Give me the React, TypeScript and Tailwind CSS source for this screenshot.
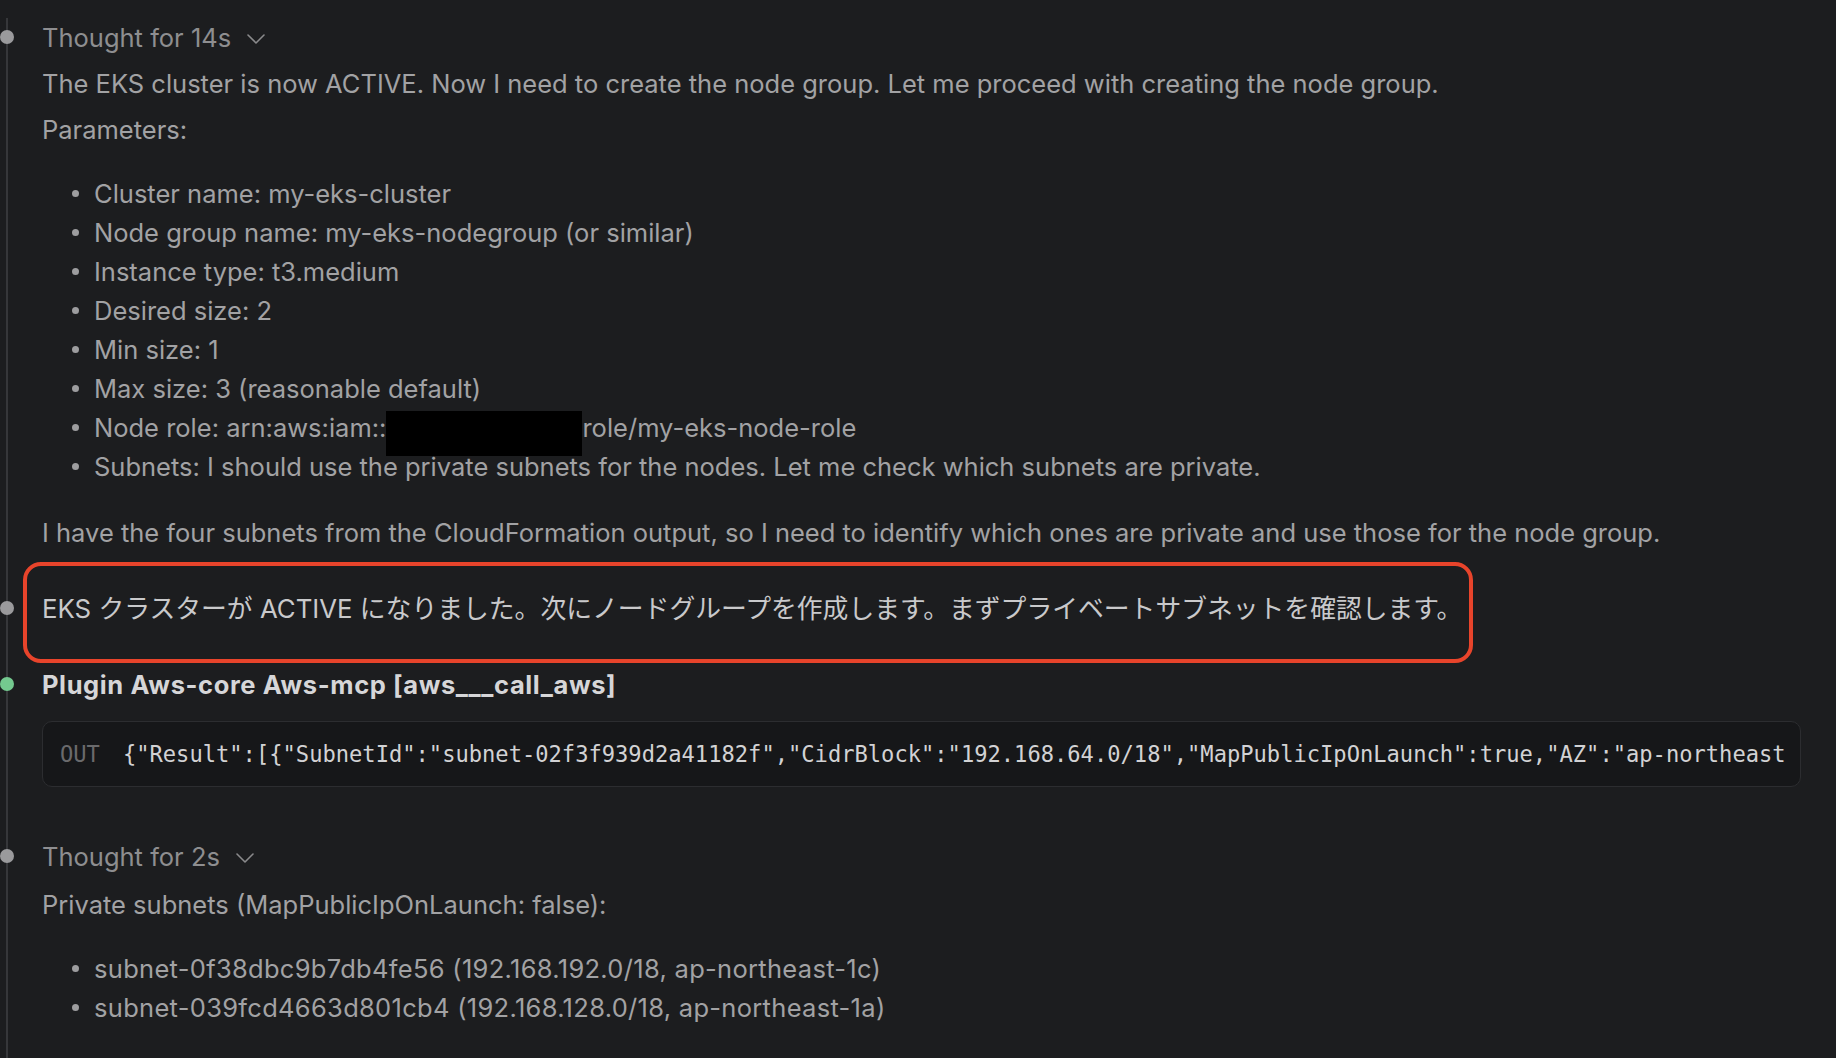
const sans = "font-['Inter','Noto_Sans_CJK_JP',sans-serif]";

const Dot = ({ green }: { green?: boolean }) => (
  <span
    className={`absolute -left-[42px] top-[12px] h-[14px] w-[14px] rounded-full ${
      green ? "bg-[#74c98f]" : "bg-[#9a9a9c]"
    }`}
  />
);

const Bullets = ({ items, wide }: { items: React.ReactNode[]; wide?: boolean }) => (
  <ul className={`mt-[25px] flex flex-col ${wide ? "tracking-[0.3px]" : ""}`}>
    {items.map((item, i) => (
      <li key={i} className="flex h-[39px] items-center pl-[30px]">
        <span className="mr-[15px] h-[7px] w-[7px] shrink-0 rounded-full bg-[#9d9d9f]" />
        <span className="flex items-center whitespace-nowrap">{item}</span>
      </li>
    ))}
  </ul>
);

const Thought = ({ label }: { label: string }) => (
  <div className="relative flex h-[39px] items-center">
    <Dot />
    <span className="text-[#8e8e90]">{label}</span>
    <svg className="ml-[16px] mt-[2px]" width="18" height="10" viewBox="0 0 18 10" fill="none">
      <path d="M1 1l8 8 8-8" stroke="#8a8a8c" strokeWidth="1.6" strokeLinecap="round" strokeLinejoin="round" />
    </svg>
  </div>
);

export default function App() {
  return (
    <div className={`h-screen w-full overflow-hidden bg-[#1c1d1f] pl-[6px] pt-[18px] ${sans} text-[25.5px] leading-[39px] text-[#a2a2a4]`}>
      <div className="min-h-full border-l-2 border-[#36373a] pl-[34px]">
        <Thought label="Thought for 14s" />
        <p className="mt-[7px] whitespace-nowrap">
          The EKS cluster is now ACTIVE. Now I need to create the node group. Let me proceed with creating the node group.
        </p>
        <p className="mt-[7px]">Parameters:</p>
        <Bullets
          items={[
            "Cluster name: my-eks-cluster",
            "Node group name: my-eks-nodegroup (or similar)",
            "Instance type: t3.medium",
            "Desired size: 2",
            "Min size: 1",
            "Max size: 3 (reasonable default)",
            <>
              <span>Node role: arn:aws:iam::</span>
              <span className="block h-[45px] w-[196px] translate-y-[6px] bg-black" />
              <span>role/my-eks-node-role</span>
            </>,
            "Subnets: I should use the private subnets for the nodes. Let me check which subnets are private.",
          ]}
        />
        <p className="mt-[27px] whitespace-nowrap">
          I have the four subnets from the CloudFormation output, so I need to identify which ones are private and use those for the node group.
        </p>

        <div className="relative mt-[37px] h-[39px] whitespace-nowrap text-[25.8px] text-[#c9c9cb]">
          <Dot />
          <div className="pointer-events-none absolute -top-[27px] left-[-19px] h-[101px] w-[1450px] rounded-[18px] border-4 border-[#e8442b]" />
          EKS クラスターが ACTIVE になりました。次にノードグループを作成します。まずプライベートサブネットを確認します。
        </div>

        <div className="relative mt-[37px] flex h-[39px] items-center font-bold tracking-[0.6px] text-[#d6d6d8]">
          <Dot green />
          Plugin Aws-core Aws-mcp [aws___call_aws]
        </div>

        <div className="mt-[17px] mr-[35px] flex h-[66px] items-center overflow-hidden whitespace-nowrap rounded-[10px] border border-[#2c2d30] bg-[#161719] pl-[17px] font-['DejaVu_Sans_Mono',monospace] text-[22.1px]">
          <span className="text-[#6a6a6c]">OUT</span>
          <span className="ml-[23px] text-[#d2d2d4]">
            {'{"Result":[{"SubnetId":"subnet-02f3f939d2a41182f","CidrBlock":"192.168.64.0/18","MapPublicIpOnLaunch":true,"AZ":"ap-northeast'}
          </span>
        </div>

        <div className="mt-[50px]">
          <Thought label="Thought for 2s" />
        </div>
        <p className="mt-[9px]">Private subnets (MapPublicIpOnLaunch: false):</p>
        <Bullets
          wide
          items={[
            "subnet-0f38dbc9b7db4fe56 (192.168.192.0/18, ap-northeast-1c)",
            "subnet-039fcd4663d801cb4 (192.168.128.0/18, ap-northeast-1a)",
          ]}
        />
      </div>
    </div>
  );
}
